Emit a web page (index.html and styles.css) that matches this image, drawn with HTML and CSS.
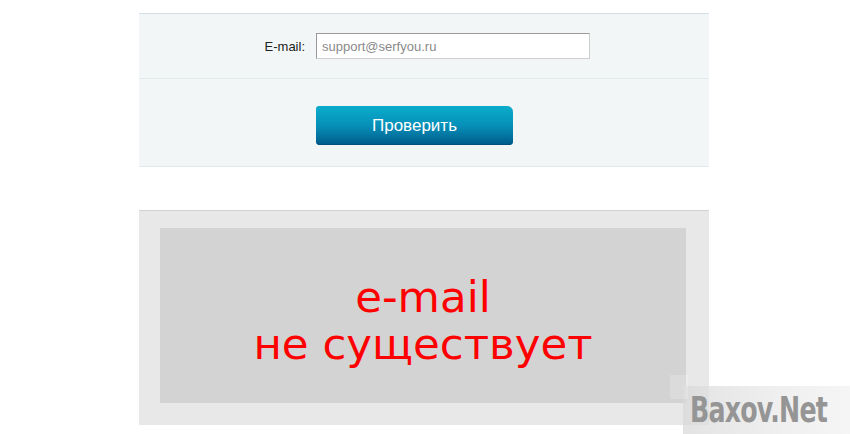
FILE: index.html
```html
<!DOCTYPE html>
<html lang="ru">
<head>
	<meta charset="UTF-8">
	<title>Проверка e-mail</title>
	<link rel="stylesheet" href="styles.css">
</head>
<body>
	<div class="page">
		<div class="check-form">
			<div class="form-row">
				<label class="form-label" for="email">E-mail:</label>
				<input class="form-input" id="email" type="text" placeholder="support@serfyou.ru">
			</div>
			<div class="form-row form-row-btn">
				<span></span>
				<button class="check-btn" type="button">Проверить</button>
			</div>
		</div>
		<div class="result">
			<div class="result-box">
				<p>e-mail<br>не существует</p>
			</div>
		</div>
	</div>
	<div class="watermark">
		<span class="wm-square"></span>
		<span class="wm-text">Baxov.Net</span>
	</div>
</body>
</html>
```

FILE: styles.css
```css
*{
	margin: 0;
	padding: 0;
	box-sizing: border-box;
}
body{
	background: #fff;
	font-family: "Liberation Sans", Arial, sans-serif;
	width: 850px;
	height: 434px;
	overflow: hidden;
	position: relative;
}
.page{
	width: 570px;
	margin-left: 139px;
	padding-top: 13px;
}
.check-form{
	background: #f2f6f7;
	border-top: 1px solid #d4dfe4;
	border-bottom: 1px solid #e2e9ec;
}
.form-row{
	display: grid;
	grid-template-columns: 166px 274px;
	column-gap: 11px;
	align-items: center;
	height: 64px;
}
.form-label{
	text-align: right;
	font-size: 13px;
	color: #222;
}
.form-input{
	height: 26px;
	border: 1px solid #cfcfcf;
	border-top-color: #9a9a9a;
	border-left-color: #9a9a9a;
	padding: 0 5px;
	font-family: "Liberation Sans", Arial, sans-serif;
	font-size: 13px;
	color: #333;
	background: #fff;
	outline: none;
}
.form-input::placeholder{
	color: #8a8a8a;
}
.form-row-btn{
	height: 88px;
	border-top: 1px solid #e2e9ec;
	grid-template-columns: 166px 197px;
	align-items: start;
	padding-top: 27px;
}
.check-btn{
	height: 39px;
	border: none;
	border-radius: 3px 6px 4px 4px;
	background: linear-gradient(to bottom, #0aaccc 0%, #0690b8 50%, #005b8c 100%);
	box-shadow: inset 0 -1px 0 #004f7c;
	color: #fff;
	font-family: "Liberation Sans", Arial, sans-serif;
	font-size: 17px;
	cursor: pointer;
}
.result{
	margin-top: 43px;
	background: #e8e8e8;
	border-top: 1px solid #d2d2d2;
	padding: 17px 23px 22px 21px;
}
.result-box{
	height: 175px;
	background: #d3d3d3;
	display: flex;
	align-items: center;
	justify-content: center;
}
.result-box p{
	font-family: "DejaVu Sans", Verdana, sans-serif;
	font-size: 43.5px;
	line-height: 47px;
	color: #ff0000;
	text-align: center;
	padding-top: 10px;
}
.watermark{
	position: absolute;
	right: 0;
	bottom: 0;
	width: 167px;
	height: 48px;
	background: linear-gradient(to right, rgba(215,215,215,0.7) 0%, rgba(238,238,238,0.9) 60%, rgba(244,244,244,0.9) 100%);
}
.wm-square{
	position: absolute;
	left: -13px;
	top: -11px;
	width: 18px;
	height: 24px;
	background: rgba(255,255,255,0.2);
}
.wm-text{
	position: absolute;
	left: 7px;
	top: 9px;
	font-family: "DejaVu Sans Condensed", "Liberation Sans", sans-serif;
	font-weight: bold;
	font-size: 36px;
	line-height: 30px;
	letter-spacing: -1px;
	color: #959595;
	transform: scaleX(0.78);
	transform-origin: left center;
	white-space: nowrap;
}
```
